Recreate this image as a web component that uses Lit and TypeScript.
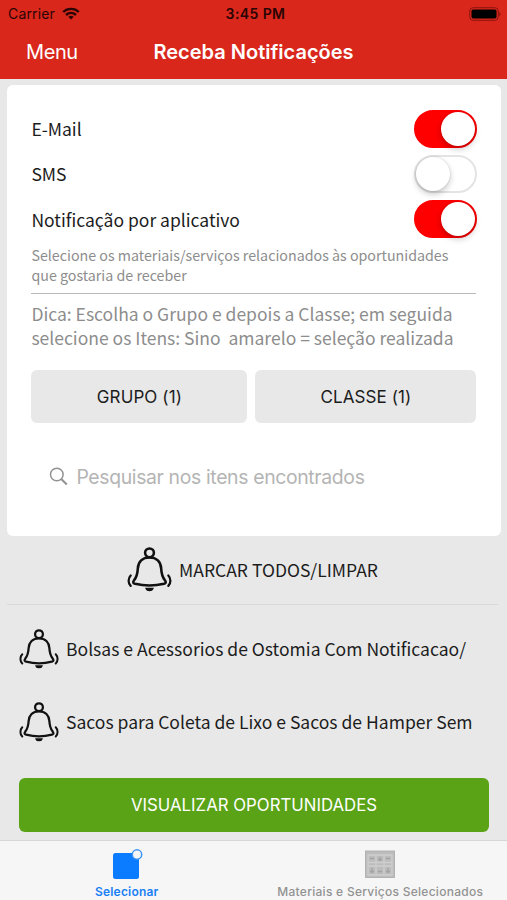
import { LitElement, html, css, svg } from "lit";
import { customElement, property } from "lit/decorators.js";

@customElement("toggle-switch")
class ToggleSwitch extends LitElement {
  @property({ type: Boolean, reflect: true }) on = false;
  static styles = css`
    :host { display: block; width: 63px; height: 38px; flex: none; }
    .track {
      box-sizing: border-box; width: 100%; height: 100%; border-radius: 19px;
      border: 2px solid #e4e4e4; background: #fff; display: flex; align-items: center;
    }
    .knob {
      width: 34px; height: 34px; border-radius: 50%; background: #fff;
      box-shadow: 0 3px 6px rgba(0, 0, 0, 0.22), 0 0 2px rgba(0, 0, 0, 0.15);
    }
    :host([on]) .track { background: #fe0000; border-color: #fe0000; justify-content: flex-end; }
  `;
  render() {
    return html`<div class="track"><div class="knob"></div></div>`;
  }
}

@customElement("bell-icon")
class BellIcon extends LitElement {
  static styles = css`
    :host { display: block; flex: none; }
    svg { display: block; width: 100%; height: 100%; }
  `;
  render() {
    return html`<svg viewBox="0 0 44 44" fill="none" stroke="#111" stroke-width="2.5" stroke-linecap="round">
      ${svg`
        <circle cx="22" cy="5.700" r="4.300"/>
        <path d="M22 10.200C15 10.200 11 14.600 10.600 20.900C10.300 27 9 30 6.800 32.800C5.600 34.400 6 35.500 7.800 36C16 38 28 38 36.200 36C38 35.500 38.400 34.400 37.200 32.800C35 30 33.700 27 33.400 20.900C33 14.600 29 10.200 22 10.200Z"/>
        <path d="M19 40.800C19.800 42.900 24.200 42.900 25 40.800Z" fill="#111" stroke-width="1.800"/>
        <path d="M3.600 27.800C.9 30.500.9 35.300 3.600 38M40.400 27.800C43.100 30.500 43.100 35.300 40.400 38" stroke-width="2.200"/>
      `}
    </svg>`;
  }
}

@customElement("app-root")
class AppRoot extends LitElement {
  static styles = css`
    :host {
      display: flex; flex-direction: column; width: 507px; height: 900px; overflow: hidden;
      background: #e8e8e8; color: #1c1c1c; font-family: "Noto Sans CJK SC", sans-serif;
      white-space: nowrap;
    }
    svg { display: block; flex: none; }
    header { height: 79px; flex: none; background: #d9271c; font-family: Inter, sans-serif; }
    .status {
      display: grid; grid-template-columns: 1fr auto 1fr; align-items: center; height: 27px;
      padding: 0 6px 0 8px; color: #2b0403; font-size: 14px; line-height: 27px;
    }
    .carrier { display: flex; align-items: center; gap: 7px; letter-spacing: 0.15px; }
    .time { font-weight: 600; letter-spacing: 0.4px; padding-left: 2px; }
    .battery { justify-self: end; }
    .nav {
      display: grid; grid-template-columns: 1fr auto 1fr; align-items: center; height: 50px;
      padding: 0 26px; color: #fff; font-size: 20px; line-height: 50px;
    }
    .menu { letter-spacing: -0.4px; }
    .title { font-weight: 600; }
    .card {
      flex: none; box-sizing: border-box; height: 451px; margin: 6px 6px 0 7px; padding: 21px 25px 0 24.400px;
      background: #fff; border-radius: 6px;
    }
    .option { display: flex; align-items: center; justify-content: space-between; height: 45.300px; font-size: 17.500px; line-height: 43px; margin-right: -1px; }
    .hint { margin-top: 3px; padding-bottom: 8px; border-bottom: 1px solid #b9b9b9; color: #8d8d8d; font-size: 14.250px; line-height: 20px; }
    .tip { margin-top: 8px; color: #8d8d8d; font-size: 17.500px; line-height: 24px; white-space: pre; }
    .filters { display: grid; grid-template-columns: 216px 221px; gap: 8px; margin-top: 20px; }
    .filter {
      height: 53px; border-radius: 6px; background: #e8e8e8; text-align: center;
      font: 400 17px/54px Inter, sans-serif; letter-spacing: 0.1px;
    }
    .search {
      display: flex; align-items: center; gap: 8px; margin: 40px 0 0 18px; height: 28px;
      font: 19.400px/28px Inter, sans-serif; letter-spacing: -0.350px; color: #b4b4b4;
    }
    .mark {
      display: flex; align-items: center; justify-content: center; gap: 7px; flex: none; box-sizing: border-box;
      height: 69px; margin: 0 9px 0 7px; padding-bottom: 1px; border-bottom: 1px solid #d9d9d9; font-size: 17.500px;
    }
    .mark bell-icon { width: 45px; height: 45px; }
    .item { display: flex; align-items: center; gap: 7px; flex: none; height: 73px; padding-left: 19px; font-size: 17.550px; }
    .items { padding-top: 7px; height: 166px; flex: none; }
    .item bell-icon { width: 40px; height: 40px; }
    .view {
      flex: none; height: 54px; margin: 0 18px 0 19px; border-radius: 6px; background: #5aa316; color: #fff;
      text-align: center; font: 16.800px/55px Inter, sans-serif;
    }
    .tabs {
      display: grid; grid-template-columns: 1fr 1fr; flex: 1; margin-top: 8px; box-sizing: border-box;
      border-top: 1px solid #d6d6d6; background: #f6f6f6; font: 500 12px/14px Inter, sans-serif;
      letter-spacing: 0.270px; color: #929292;
    }
    .tab { display: flex; flex-direction: column; align-items: center; gap: 4px; padding-top: 7px; }
    .active { color: #1a80f5; font-weight: 600; letter-spacing: 0.2px; }
  `;

  render() {
    return html`
      <header>
        <div class="status">
          <div class="carrier"><span>Carrier</span>
            <svg width="18" height="13" viewBox="0 0 18 13" fill="none" stroke="#2b0403" stroke-width="2.400">
              <path d="M1.200 5C5.500.8 12.500.8 16.800 5M4 8C7 5.200 11 5.200 14 8"/>
              <path d="M6.300 9.700C8 8.300 10 8.300 11.700 9.700L9 12.500Z" fill="#2b0403" stroke="none"/>
            </svg>
          </div>
          <span class="time">3:45 PM</span>
          <svg class="battery" width="32" height="14" viewBox="0 0 32 14">
            <rect x="0.700" y="0.700" width="28.600" height="12.600" rx="3.500" fill="none" stroke="#8a140d"/>
            <rect x="2.500" y="2.500" width="25" height="9" rx="1.800" fill="#000"/>
            <path d="M30.300 5V9.200Q31.600 8.500 31.600 7.100T30.300 5Z" fill="#8a140d"/>
          </svg>
        </div>
        <div class="nav"><span class="menu">Menu</span><span class="title">Receba Notificações</span></div>
      </header>
      <section class="card">
        <div class="option"><span>E-Mail</span><toggle-switch on></toggle-switch></div>
        <div class="option"><span>SMS</span><toggle-switch></toggle-switch></div>
        <div class="option"><span>Notificação por aplicativo</span><toggle-switch on></toggle-switch></div>
        <div class="hint">Selecione os materiais/serviços relacionados às oportunidades<br>que gostaria de receber</div>
        <div class="tip">Dica: Escolha o Grupo e depois a Classe; em seguida<br>selecione os Itens: Sino  amarelo = seleção realizada</div>
        <div class="filters"><div class="filter">GRUPO (1)</div><div class="filter">CLASSE (1)</div></div>
        <div class="search">
          <svg width="19" height="19" viewBox="0 0 19 19" fill="none" stroke="#929292" stroke-width="1.500">
            <circle cx="7.800" cy="7.500" r="6.300"/><path d="M12.300 12L17.800 17.500" stroke-width="2"/>
          </svg>
          <span>Pesquisar nos itens encontrados</span>
        </div>
      </section>
      <div class="mark"><bell-icon></bell-icon><span>MARCAR TODOS/LIMPAR</span></div>
      <div class="items">
        <div class="item"><bell-icon></bell-icon><span>Bolsas e Acessorios de Ostomia Com Notificacao/</span></div>
        <div class="item"><bell-icon></bell-icon><span>Sacos para Coleta de Lixo e Sacos de Hamper Sem</span></div>
      </div>
      <div class="view">VISUALIZAR OPORTUNIDADES</div>
      <nav class="tabs">
        <div class="tab active">
          <svg width="32" height="33" viewBox="0 0 32 33">
            <rect x="2" y="5" width="26" height="26" rx="2.500" fill="#0b7bff"/>
            <circle cx="26" cy="6.500" r="4.700" fill="#f6f6f6" stroke="#3f94f5" stroke-width="1.500"/>
          </svg>
          <span>Selecionar</span>
        </div>
        <div class="tab">
          <svg width="32" height="33" viewBox="0 0 32 33">
            <rect x="1.500" y="3" width="29" height="26.500" fill="#bcbcbc" stroke="#b2b2b2"/>
            <path d="M4 7H28V27H4ZM12 7V27M20 7V27M4 14.500H28M4 18H28" fill="none" stroke="#cecece" stroke-width="1.300"/>
            <path d="M6 10.500H10M14 11.500H18M22 10.500H26M6 23.500H10M14 23.500H18M22 23.500H26M8 20V25M16 9V13M24 20V25" fill="none" stroke="#a2a2a2" stroke-width="1.300"/>
          </svg>
          <span>Materiais e Serviços Selecionados</span>
        </div>
      </nav>
    `;
  }
}
